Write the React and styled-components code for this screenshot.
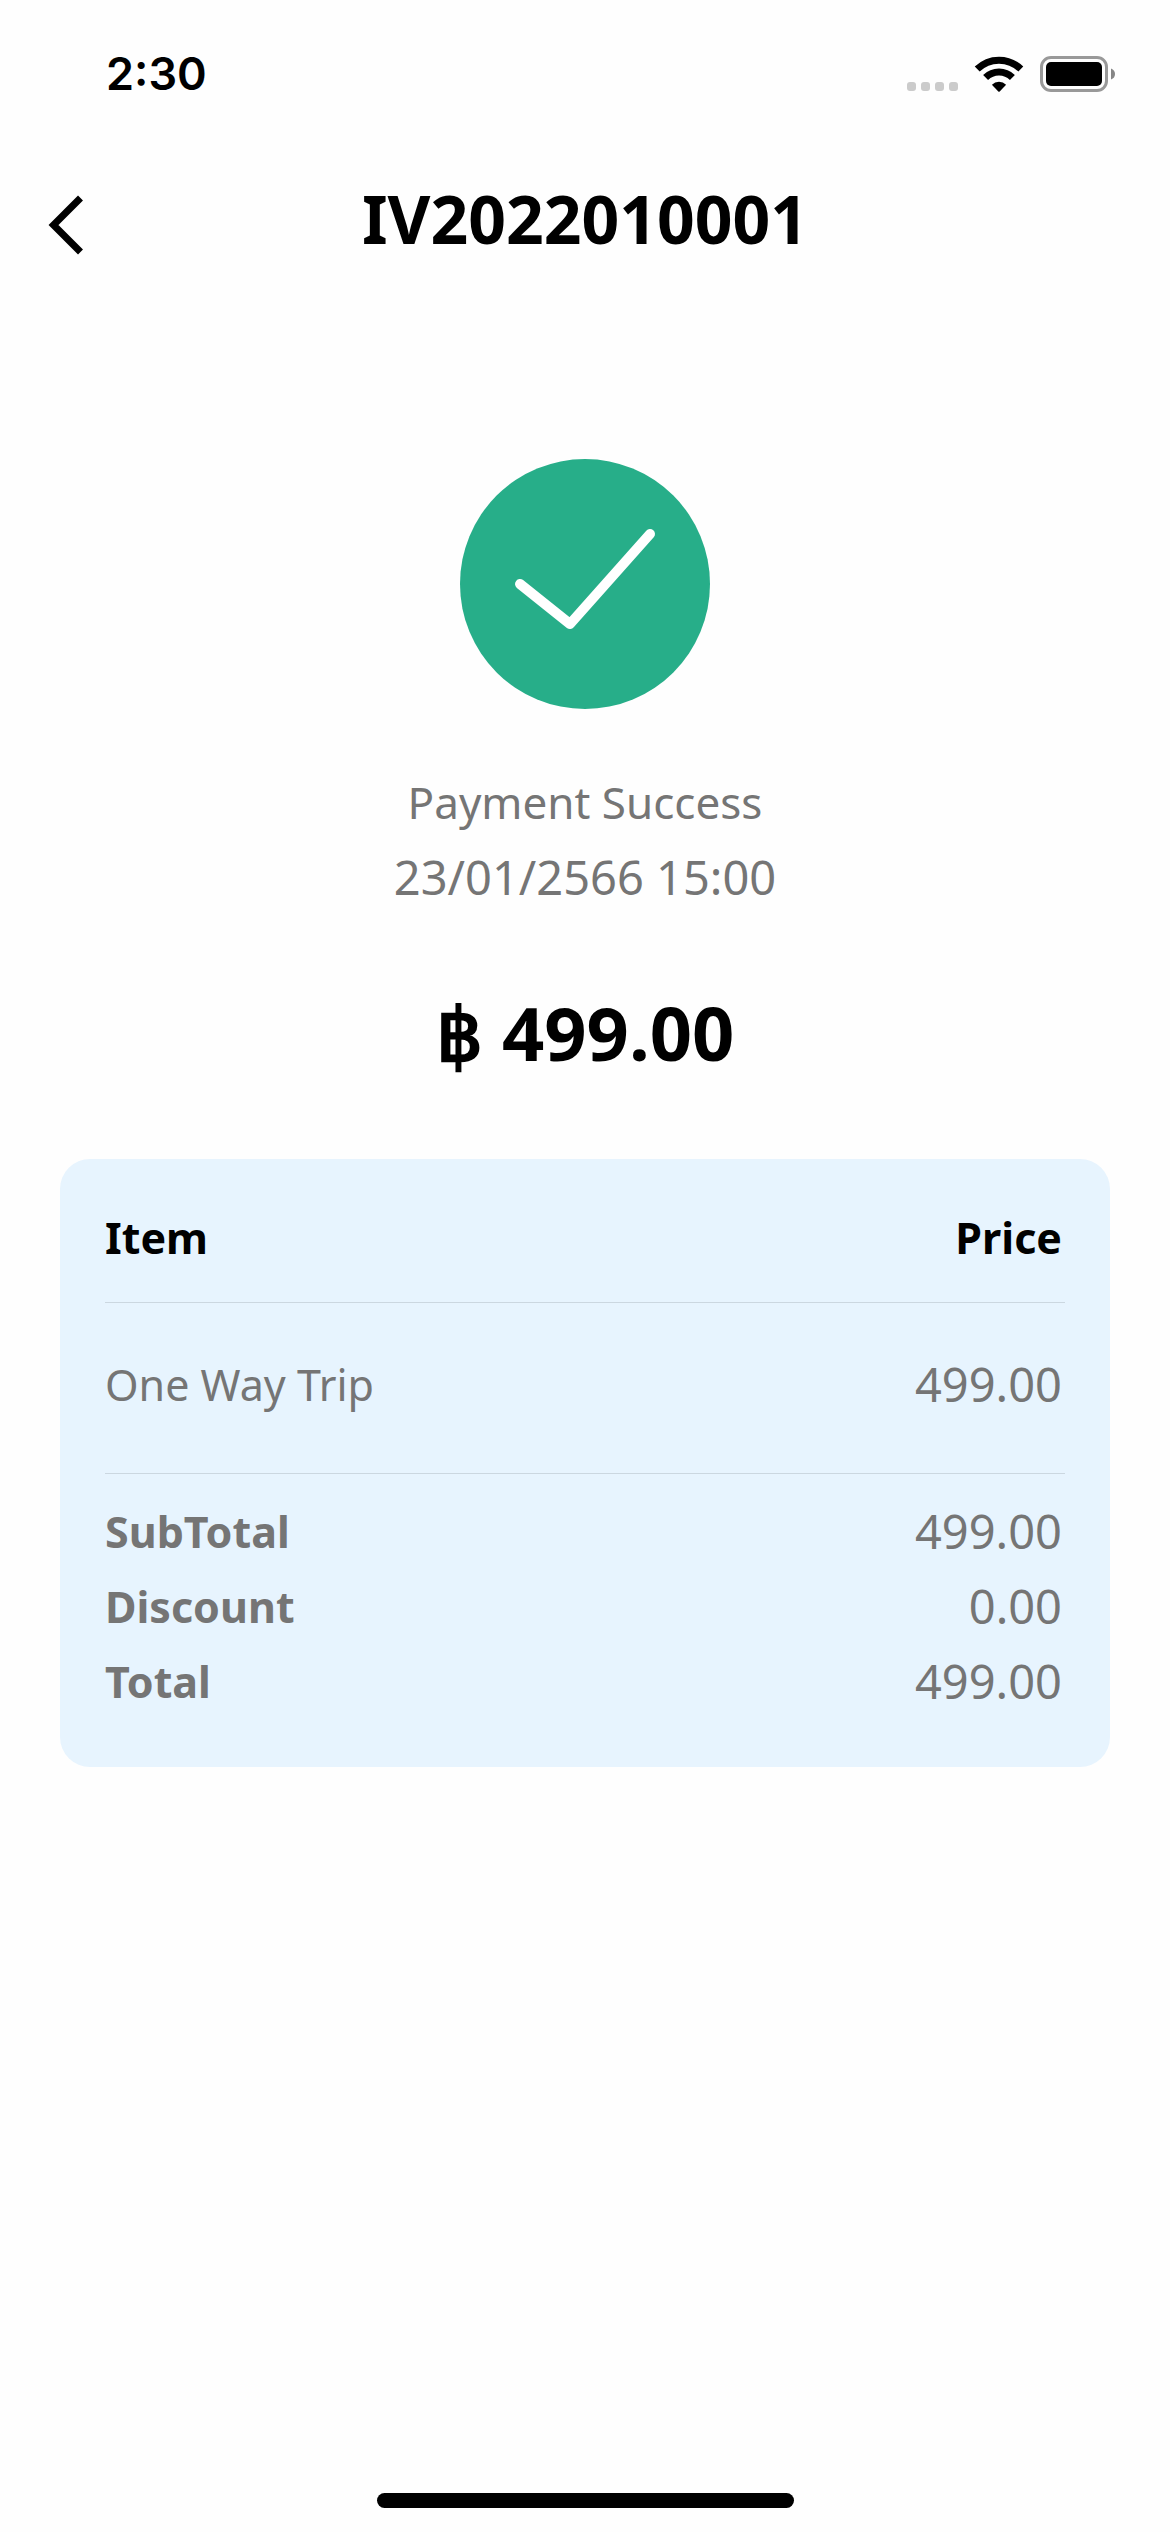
import React from "react";
import styled, { createGlobalStyle } from "styled-components";

const GlobalStyle = createGlobalStyle`
  * {
    box-sizing: border-box;
  }
  body {
    margin: 0;
    background: #fefefe;
    color: #000;
    font-family: "Noto Sans", "Open Sans", sans-serif;
  }
`;

const Screen = styled.div`
  display: flex;
  flex-direction: column;
  min-height: 100vh;
`;

const StatusBar = styled.div`
  display: flex;
  align-items: center;
  justify-content: space-between;
  height: 148px;
  padding: 0 54px 0 106px;
`;

const Clock = styled.time`
  font-family: Inter, sans-serif;
  font-size: 45px;
  font-weight: 600;
  line-height: 60px;
`;

const StatusIcons = styled.div`
  display: flex;
  align-items: center;
  gap: 16px;
`;

const NavBar = styled.header`
  display: grid;
  grid-template-columns: 120px 1fr 120px;
  align-items: center;
  height: 150px;
`;

const BackButton = styled.button`
  display: flex;
  align-items: center;
  height: 100px;
  padding: 4px 0 0 48px;
  border: 0;
  background: none;
  color: inherit;
  cursor: pointer;
`;

const Title = styled.h1`
  margin: 0;
  padding-bottom: 10px;
  font-size: 66px;
  font-weight: 700;
  line-height: 90px;
  text-align: center;
`;

const Main = styled.main`
  padding: 161px 60px 0;
`;

const Summary = styled.section`
  display: flex;
  flex-direction: column;
  align-items: center;
  text-align: center;
`;

const Status = styled.p`
  margin: 56px 0 0;
  color: #757575;
  line-height: 75px;
`;

const StatusLine = styled.span`
  display: block;
  font-size: ${(p) => (p.$figures ? 47 : 44)}px;
`;

const Amount = styled.p`
  margin: 65px 0 73px;
  font-size: 74px;
  font-weight: 700;
  line-height: 106px;
`;

const Card = styled.section`
  padding: 41px 45px 48px;
  border-radius: 30px;
  background: #e7f4fe;
`;

const Table = styled.table`
  width: 100%;
  border-collapse: separate;
  border-spacing: 0;
  color: #757575;
  font-size: 43px;
  line-height: 75px;

  th,
  td {
    padding: 0;
    vertical-align: middle;
  }
`;

const Divided = styled.tr`
  color: ${(p) => (p.$head ? "#000" : "inherit")};

  &&& > * {
    padding-top: ${(p) => (p.$head ? 0 : 44)}px;
    padding-bottom: ${(p) => (p.$head ? 27 : 51)}px;
    border-bottom: 1px solid #cbd7e0;
  }
`;

const TotalRow = styled.tr`
  &&:first-child > * {
    padding-top: 20px;
  }
`;

const Label = styled.th`
  font-weight: ${(p) => (p.$plain ? 400 : 700)};
  text-align: left;
`;

const PriceHead = styled.th`
  &&& {
    padding-right: 3px;
  }
  font-weight: 700;
  text-align: right;
`;

const Price = styled.td`
  &&& {
    padding-right: 3px;
  }
  font-size: 47px;
  text-align: right;
`;

const HomeIndicator = styled.div`
  width: 417px;
  height: 15px;
  margin: auto auto 24px;
  border-radius: 8px;
  background: #000;
`;

const SignalIcon = () => (
  <svg width="51" height="36" viewBox="0 0 51 36" fill="#cbcbcb" aria-hidden="true">
    {[0, 14, 28, 42].map((x) => (
      <rect key={x} x={x} y="26" width="9" height="9" rx="3" />
    ))}
  </svg>
);

const WifiIcon = () => (
  <svg width="50" height="36" viewBox="0 0 50 36" aria-hidden="true">
    <g fill="none" stroke="#000" strokeWidth="7">
      <path d="M3.2 13.1a31 31 0 0 1 43.6 0" />
      <path d="M11.6 21.6a19 19 0 0 1 26.8 0" />
    </g>
    <path d="M17.9 28.7a10 10 0 0 1 14.2 0L25.7 35.5q-.7.7-1.4 0z" />
  </svg>
);

const BatteryIcon = () => (
  <svg width="76" height="36" viewBox="0 0 76 36" aria-hidden="true">
    <rect x="1.5" y="1.5" width="65" height="33" rx="9.5" fill="none" stroke="#999" strokeWidth="3" />
    <rect x="6" y="6" width="56" height="24" rx="5" />
    <path d="M71 12.5q4 1.5 4 5.500t-4 5.500z" fill="#868686" />
  </svg>
);

const BackIcon = () => (
  <svg width="36" height="60" viewBox="0 0 36 60" fill="none" stroke="#000" strokeWidth="7" aria-hidden="true">
    <path d="M32.500 3L5.500 30l27 27" />
  </svg>
);

const SuccessIcon = () => (
  <svg width="250" height="250" viewBox="0 0 250 250" aria-hidden="true">
    <circle cx="125" cy="125" r="125" fill="#27ae89" />
    <path
      d="M60 125l50 40 80-90"
      fill="none"
      stroke="#fff"
      strokeWidth="10"
      strokeLinecap="round"
      strokeLinejoin="round"
    />
  </svg>
);

const items = [{ name: "One Way Trip", price: "499.00" }];

const totals = [
  { name: "SubTotal", price: "499.00" },
  { name: "Discount", price: "0.00" },
  { name: "Total", price: "499.00" },
];

export default function App() {
  return (
    <>
      <GlobalStyle />
      <Screen>
        <StatusBar>
          <Clock>2:30</Clock>
          <StatusIcons>
            <SignalIcon />
            <WifiIcon />
            <BatteryIcon />
          </StatusIcons>
        </StatusBar>
        <NavBar>
          <BackButton type="button" aria-label="Back">
            <BackIcon />
          </BackButton>
          <Title>IV2022010001</Title>
        </NavBar>
        <Main>
          <Summary>
            <SuccessIcon />
            <Status>
              <StatusLine>Payment Success</StatusLine>
              <StatusLine $figures>23/01/2566 15:00</StatusLine>
            </Status>
            <Amount>฿ 499.00</Amount>
          </Summary>
          <Card>
            <Table>
              <thead>
                <Divided $head>
                  <Label scope="col">Item</Label>
                  <PriceHead scope="col">Price</PriceHead>
                </Divided>
              </thead>
              <tbody>
                {items.map((item) => (
                  <Divided key={item.name}>
                    <Label scope="row" $plain>
                      {item.name}
                    </Label>
                    <Price>{item.price}</Price>
                  </Divided>
                ))}
              </tbody>
              <tfoot>
                {totals.map((row) => (
                  <TotalRow key={row.name}>
                    <Label scope="row">{row.name}</Label>
                    <Price>{row.price}</Price>
                  </TotalRow>
                ))}
              </tfoot>
            </Table>
          </Card>
        </Main>
        <HomeIndicator />
      </Screen>
    </>
  );
}
